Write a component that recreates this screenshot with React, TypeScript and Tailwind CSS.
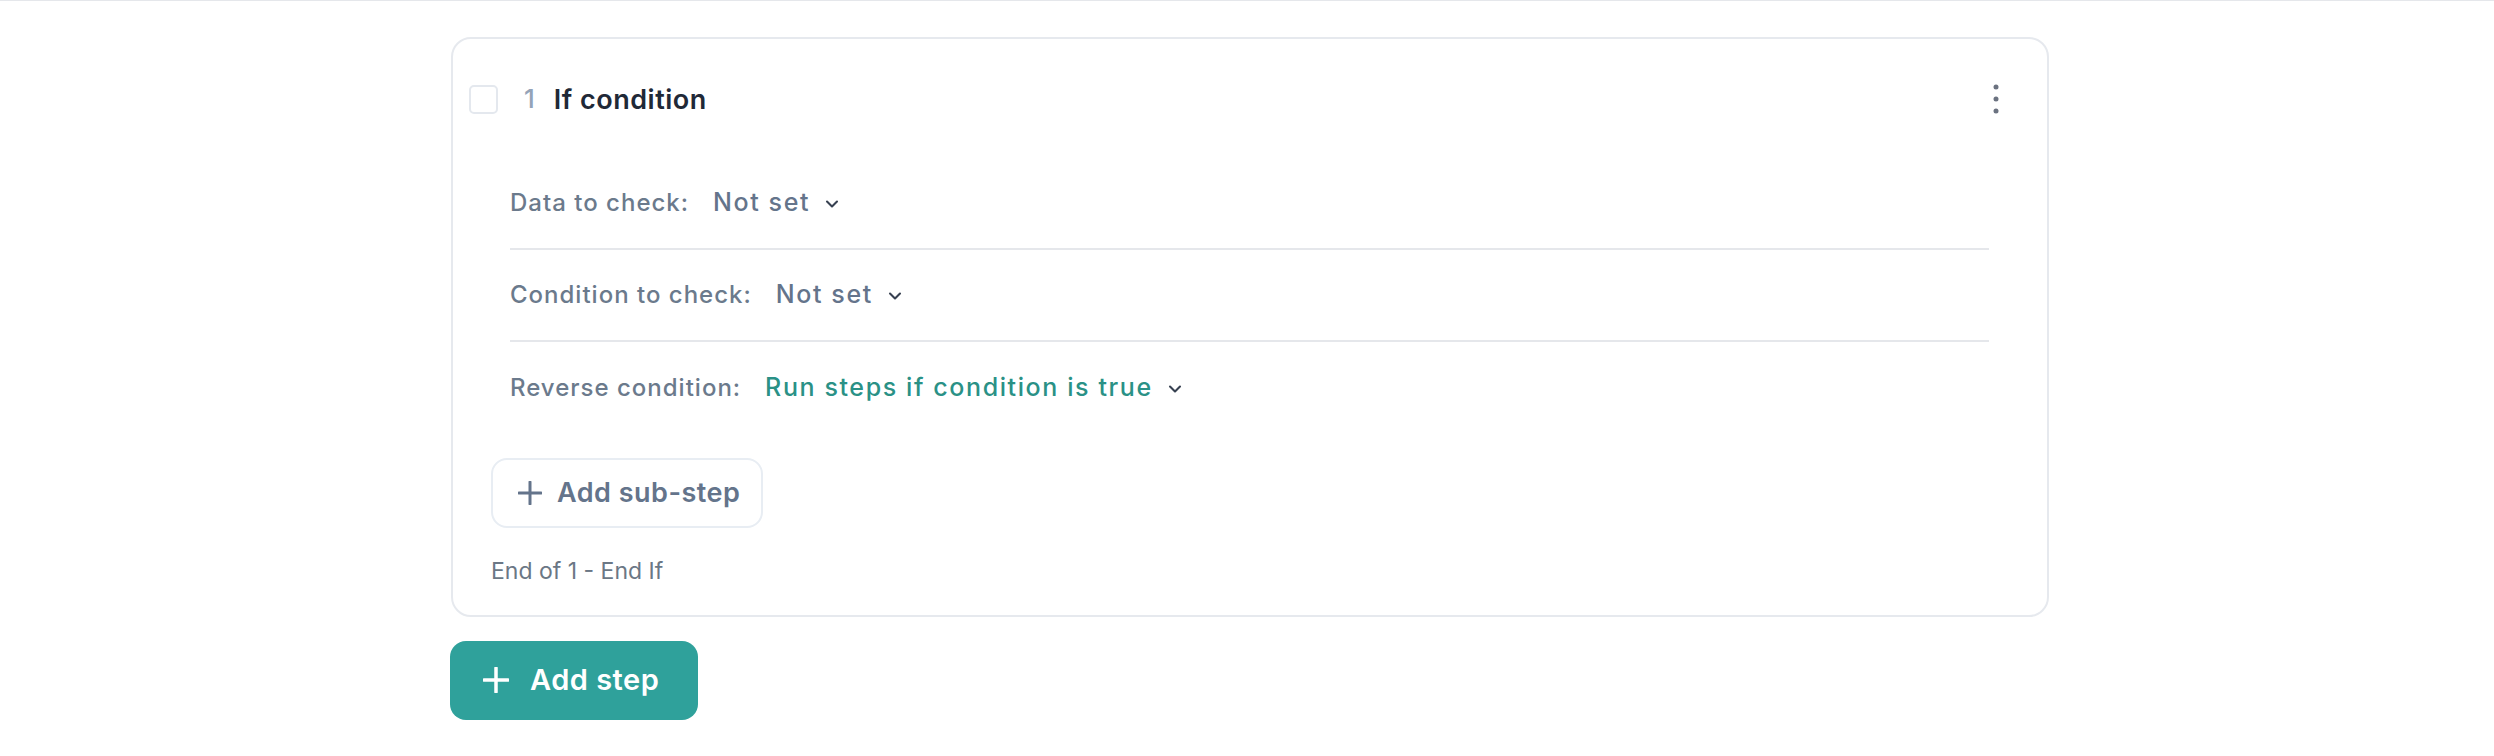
import React from 'react';
import { ChevronDown } from 'lucide-react';

interface ConditionRow {
  label: string;
  value: string;
  active?: boolean;
}

const rows: ConditionRow[] = [
  { label: 'Data to check:', value: 'Not set' },
  { label: 'Condition to check:', value: 'Not set' },
  { label: 'Reverse condition:', value: 'Run steps if condition is true', active: true },
];

const PlusIcon: React.FC<{ className?: string; size: number; stroke: number }> = ({ className, size, stroke }) => (
  <svg width={size} height={size} viewBox={`0 0 ${size} ${size}`} className={className} fill="none">
    <path
      d={`M${size / 2} 1V${size - 1}M1 ${size / 2}H${size - 1}`}
      stroke="currentColor"
      strokeWidth={stroke}
      strokeLinecap="round"
    />
  </svg>
);

const App: React.FC = () => {
  return (
    <div
      className="min-h-screen w-full bg-white border-t border-[#e5e7eb] flex justify-center pl-[6px]"
      style={{ fontFamily: 'Inter, "Noto Sans", sans-serif' }}
    >
      <div className="w-[1598px] pt-[36px]">
        {/* step card */}
        <div className="rounded-[20px] border-2 border-[#e6e9ee] bg-white pt-[30px] pb-[26px]">
          {/* header */}
          <div className="flex items-center h-[60px] pl-[16px] pr-[31px]">
            <div className="w-[29px] h-[29px] rounded-[5px] border-2 border-[#e4e8ee] bg-white" />
            <span className="ml-[26px] text-[26px] font-medium text-[#94a3b8] leading-none">1</span>
            <span className="ml-[19px] text-[27px] font-semibold tracking-[0.5px] text-[#1f2937] leading-none">
              If condition
            </span>
            <button className="ml-auto w-[40px] h-[40px] flex items-center justify-center text-[#6b7280]">
              <svg width="6" height="30" viewBox="0 0 6 30" fill="currentColor">
                <circle cx="3" cy="3" r="2.5" />
                <circle cx="3" cy="15" r="2.5" />
                <circle cx="3" cy="27" r="2.5" />
              </svg>
            </button>
          </div>

          {/* settings rows */}
          <div className="mt-[29px] ml-[57px] mr-[58px]">
            {rows.map((row, i) => (
              <div
                key={row.label}
                className={`flex items-center h-[92px] ${i < rows.length - 1 ? 'border-b-2 border-[#e5e7eb]' : ''}`}
              >
                <span className="text-[24px] font-medium tracking-[1px] text-[#6b7a8c]">{row.label}</span>
                <button
                  className={`ml-[24px] flex items-center text-[25px] font-medium tracking-[1.6px] ${
                    row.active ? 'text-[#2a9186]' : 'text-[#64748b]'
                  }`}
                >
                  {row.value}
                  <ChevronDown size={20} strokeWidth={2.5} className="ml-[12px] text-[#374151] mt-[2px]" />
                </button>
              </div>
            ))}
          </div>

          {/* sub-step */}
          <div className="ml-[38px] mt-[24px]">
            <button className="h-[70px] w-[272px] rounded-[16px] border-2 border-[#e8edf3] bg-white flex items-center pl-[25px] text-[#64748b]">
              <PlusIcon size={24} stroke={3} />
              <span className="ml-[15px] text-[27px] font-semibold tracking-[0.5px]">Add sub-step</span>
            </button>
          </div>

          <div className="ml-[38px] mt-[26px] text-[23px] text-[#6b7785]">End of 1 - End If</div>
        </div>

        <button className="mt-[24px] -ml-[1px] h-[79px] w-[248px] rounded-[16px] bg-[#2fa19b] flex items-center pl-[33px] text-white">
          <PlusIcon size={26} stroke={3.5} />
          <span className="ml-[21px] text-[29px] font-semibold tracking-[0.5px]">Add step</span>
        </button>
      </div>
    </div>
  );
};

export default App;
